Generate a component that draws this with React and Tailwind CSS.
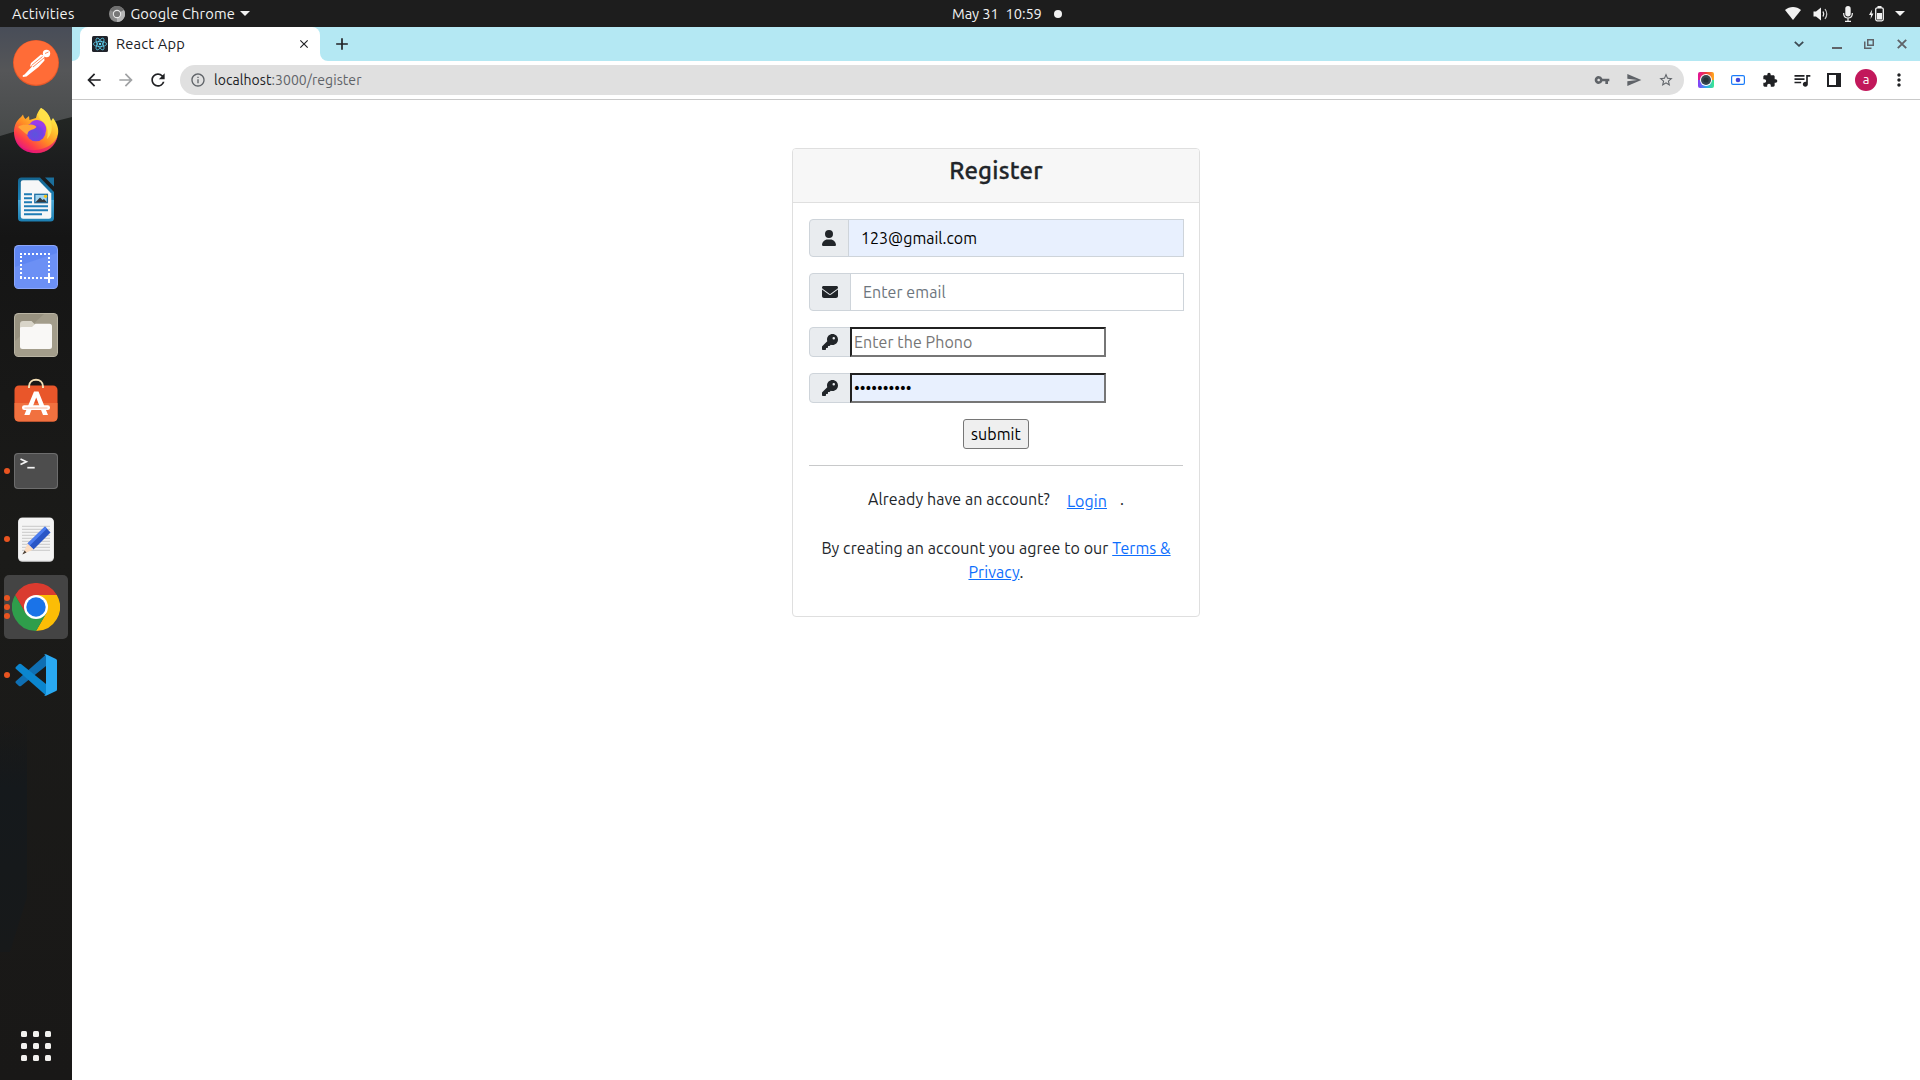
import React from "react";
import { FaUser, FaEnvelope, FaKey } from "react-icons/fa6";
import {
  MdArrowBack, MdArrowForward, MdRefresh, MdInfoOutline, MdVpnKey, MdSend, MdStarOutline,
  MdExtension, MdQueueMusic, MdMoreVert, MdClose, MdAdd,
} from "react-icons/md";

function Postman() {
  return (
    <svg width="46" height="46" viewBox="0 0 46 46">
      <circle cx="23" cy="23" r="23" fill="#e5582a" />
      <circle cx="23" cy="22.6" r="22.2" fill="#ff6c37" />
      <circle cx="33.5" cy="13.5" r="3.7" fill="#fff" />
      <path d="M31 15.5 L28 14.5 L18 23 L17 26.5 L19.5 26 L11.5 34.5 L9.8 35.3 L9.8 37 L13.5 36.5 L25.5 27 L31.5 20.5 Z" fill="#fff" />
      <path d="M29.5 16.5 L18.5 25.5 M31 18 L20 27 M32 13.5 L35.5 12" stroke="#ff6c37" strokeWidth="0.8" fill="none" />
    </svg>
  );
}

function Firefox() {
  return (
    <svg width="46" height="48" viewBox="0 0 46 48">
      <defs>
        <linearGradient id="ffBody" x1="0.85" y1="0.1" x2="0.2" y2="0.95">
          <stop offset="0" stopColor="#fff44f" />
          <stop offset="0.3" stopColor="#ffc02e" />
          <stop offset="0.55" stopColor="#ff8a25" />
          <stop offset="0.8" stopColor="#ff3f47" />
          <stop offset="1" stopColor="#e31587" />
        </linearGradient>
        <radialGradient id="ffGlobe" cx="0.45" cy="0.65" r="0.65">
          <stop offset="0" stopColor="#5b55dc" />
          <stop offset="0.6" stopColor="#7542e5" />
          <stop offset="1" stopColor="#a83af0" />
        </radialGradient>
      </defs>
      <path d="M28 2 C35 6 37 11 38 15 L40 12 C44 17 46 23 45 28 C43 40 34 47 23 47 C10 47 1 38 1 26 C1 19 4 14 8 11 L10 8.5 C10.5 11 11.5 12 12.5 13 L16 10 L16.5 14 L23 12 C24 7 26 4 28 2 Z" fill="url(#ffBody)" />
      <path d="M2 32 C6 42 14 45 23 44 C33 43 42 38 45 29 C43 41 33 47.5 23 47.2 C12 47 4 41 2 32 Z" fill="#e3107a" opacity="0.6" />
      <circle cx="23" cy="25.5" r="9.8" fill="url(#ffGlobe)" />
      <path d="M5 21 C9 18 13 19 16 19 C19 18 22 19 23.5 21 C22 23 19 23.5 17 24.5 C15 25.5 14.5 27 14.5 29 C11 26 8 24 5 21 Z" fill="#ffa436" />
      <path d="M17 18 C19 14 24 13 28 15 C32 17 34 21 33 26 C31 22 29 19 25 18.5 Z" fill="#9a3bea" />
      <path d="M28 2 C35 6 37 12 38 16 C40 23 38 29 34 33 C36 25 34 18 29 15 C25 12 24 8 28 2 Z" fill="#ffe14a" opacity="0.9" />
    </svg>
  );
}

function Writer() {
  return (
    <svg width="36" height="45" viewBox="0 0 36 45">
      <defs>
        <linearGradient id="wr" x1="0" y1="0" x2="0" y2="1">
          <stop offset="0" stopColor="#14648f" />
          <stop offset="0.5" stopColor="#1c83b9" />
          <stop offset="0.51" stopColor="#4aa8d6" />
          <stop offset="1" stopColor="#1c7fb2" />
        </linearGradient>
      </defs>
      <path d="M3.5 0.5 H22 L36 15 V41 Q36 44.5 32.5 44.5 H3.5 Q0 44.5 0 41 V4 Q0 0.5 3.5 0.5 Z" fill="url(#wr)" />
      <path d="M27 0.5 H36 V9.5 Z" fill="#1b6f9c" />
      <path d="M5 3.3 H20.5 L33.3 16.5 V39.5 Q33.3 41.8 31 41.8 H5 Q2.8 41.8 2.8 39.5 V5.5 Q2.8 3.3 5 3.3 Z" fill="#f6f7f8" />
      <path d="M6 17.3 H14 M6 21.3 H14 M6 25.3 H14 M6 29.3 H30 M6 33.3 H30 M6 37.3 H24" stroke="#1e7cb5" strokeWidth="1.9" />
      <rect x="16.8" y="17.3" width="12.6" height="8.4" fill="#9ed4f0" stroke="#1d6fa3" strokeWidth="1.3" />
      <path d="M17.5 25.2 L22 20.5 L24.5 23 L26 22 L29 25.2 Z" fill="#343a3e" />
      <circle cx="27.5" cy="19.3" r="1.6" fill="#f5c211" />
    </svg>
  );
}

function ScreenshotTool() {
  return (
    <svg width="44" height="44" viewBox="0 0 44 44">
      <rect width="44" height="44" rx="4.5" fill="#8ba6fa" />
      <rect x="1" y="1" width="42" height="42" rx="4" fill="#5f86f2" />
      <path d="M1 22 L43 8 V39 Q43 43 39 43 H5 Q1 43 1 39 Z" fill="#6c90f5" />
      <path d="M6 9 H36 M7 11 V34 M35 12 V29 M6 33 H30" stroke="#fff" strokeWidth="2" strokeDasharray="2 2" fill="none" />
      <path d="M35 28 V38 M30 33 H40" stroke="#fff" strokeWidth="2" />
    </svg>
  );
}

function Files() {
  return (
    <svg width="44" height="44" viewBox="0 0 44 44">
      <rect width="44" height="44" rx="4.5" fill="#b9b4a3" />
      <rect x="1" y="1" width="42" height="42" rx="4" fill="#97917f" />
      <path d="M1 28 L30 1 H39 Q43 1 43 5 V39 Q43 43 39 43 H5 Q1 43 1 39 Z" fill="#a39d8b" />
      <path d="M6 11 Q6 8 9 8 H17.5 L21.5 12 V16 H6 Z" fill="#d9d5c9" />
      <path d="M6 15 Q6 14 8 14 H18 L21.5 10.8 H35.5 Q38 10.8 38 13.5 V33.5 Q38 36 35.5 36 H8.5 Q6 36 6 33.5 Z" fill="#f9f8f6" />
    </svg>
  );
}

function Software() {
  return (
    <svg width="44" height="44" viewBox="0 0 44 44">
      <rect x="0.5" y="7.5" width="43" height="36" rx="4.5" fill="#e9562a" />
      <path d="M0.5 25 H43.5 V39 Q43.5 43.5 39 43.5 H5 Q0.5 43.5 0.5 39 Z" fill="#f1713f" />
      <path d="M15 10 V8.5 C15 -0.5 29 -0.5 29 8.5 V10" stroke="#f3deb5" strokeWidth="2" fill="none" />
      <path d="M20 13.5 H24.5 L34 37 H29 L22.2 19.5 L15.5 37 H10.3 Z" fill="#fff" />
      <rect x="8" y="27.3" width="28" height="4.6" rx="2.2" fill="#fff" />
      <path d="M10.5 30 H33.5" stroke="#f4a88c" strokeWidth="0.8" />
    </svg>
  );
}

function TerminalIcon() {
  return (
    <svg width="44" height="36" viewBox="0 0 44 36">
      <rect width="44" height="36" rx="4" fill="#6d6d6d" />
      <rect x="1" y="1" width="42" height="34" rx="3.4" fill="#4d4d4d" />
      <path d="M6.5 6 L12.3 8.7 L6.5 11.4" stroke="#f4f4f4" strokeWidth="1.7" fill="none" />
      <path d="M13.3 14.7 H20.7" stroke="#f4f4f4" strokeWidth="1.7" />
    </svg>
  );
}

function TextEditor() {
  return (
    <svg width="36" height="45" viewBox="0 0 36 45">
      <rect y="0.5" width="36" height="44.3" rx="4.5" fill="#dcdcdc" />
      <rect x="0.6" y="1" width="34.8" height="42.4" rx="4" fill="#f4f4f4" />
      <path d="M4 9.3 H32 M4 12.3 H32 M4 15.3 H32 M4 18.3 H32 M4 21.3 H32 M4 24.3 H32 M4 27.3 H32 M4 30.3 H32 M4 33.3 H32" stroke="#c4c4c4" strokeWidth="0.9" />
      <path d="M27 9.5 L32.5 15.5 L15.5 32.5 L9.5 26.5 Z" fill="#2a56c6" />
      <path d="M27 9.5 L29 11.5 L11.7 28.7 L9.5 26.5 Z" fill="#4c7df0" />
      <path d="M9.5 26.5 L15.5 32.5 L5 37 Z" fill="#fbdcc0" />
      <path d="M6.6 33.5 L8.5 35.5 L4.3 37.6 Z" fill="#4a4038" />
    </svg>
  );
}

function ChromeLogo() {
  return (
    <svg width="48" height="48" viewBox="0 0 48 48">
      <path d="M24 12 H44.8 A24 24 0 0 1 24 48 L34.4 30 Z" fill="#fbbd06" />
      <path d="M3.2 12 L13.6 30 L24 36 L34.4 30 L24 48 A24 24 0 0 1 3.2 12 Z" fill="#2f9e4b" />
      <path d="M3.2 12 A24 24 0 0 1 44.8 12 H24 L13.6 30 Z" fill="#da3b2f" />
      <circle cx="24" cy="24" r="12" fill="#fff" />
      <circle cx="24" cy="24" r="9.7" fill="#1a73e8" />
    </svg>
  );
}

function VSCode() {
  return (
    <svg width="42" height="42" viewBox="0 0 42 42">
      <path d="M31 0.5 L31 12 L6 32 Q5 32.7 4 32 L0.8 29 Q0 28 0.8 27.2 Z" fill="#0f6fb3" />
      <path d="M31 41.5 L31 30 L6 10 Q5 9.3 4 10 L0.8 13 Q0 14 0.8 14.8 Z" fill="#0b86cf" />
      <path d="M31 0.3 L41 5 Q42 5.5 42 6.5 V35.5 Q42 36.5 41 37 L31 41.7 Q29.8 42 29 41 Q31 41.5 31 39 V3 Q31 0.5 29 1 Q29.8 0 31 0.3 Z" fill="#29a9f2" />
    </svg>
  );
}

const apps = [
  { name: "Postman", Icon: Postman, dots: 0, cls: "" },
  { name: "Firefox", Icon: Firefox, dots: 0, cls: "pb-[2px]" },
  { name: "LibreOffice Writer", Icon: Writer, dots: 0, cls: "" },
  { name: "Screenshot", Icon: ScreenshotTool, dots: 0, cls: "" },
  { name: "Files", Icon: Files, dots: 0, cls: "" },
  { name: "Software", Icon: Software, dots: 0, cls: "pb-[6px]" },
  { name: "Terminal", Icon: TerminalIcon, dots: 1, cls: "" },
  { name: "Text Editor", Icon: TextEditor, dots: 1, cls: "" },
  { name: "Chrome", Icon: ChromeLogo, dots: 3, cls: "" },
  { name: "Visual Studio Code", Icon: VSCode, dots: 1, cls: "" },
];

function Wallpaper() {
  return (
    <svg className="absolute inset-0" width="72" height="1053" viewBox="0 0 72 1053" aria-hidden="true">
      <defs>
        <linearGradient id="sky" x1="0" y1="0" x2="0" y2="1">
          <stop offset="0" stopColor="#484d58" />
          <stop offset="0.4" stopColor="#555658" />
          <stop offset="1" stopColor="#474a4a" />
        </linearGradient>
        <linearGradient id="land" x1="0" y1="0" x2="0" y2="1">
          <stop offset="0.06" stopColor="#262b27" />
          <stop offset="0.13" stopColor="#1c1d1e" />
          <stop offset="0.2" stopColor="#151515" />
          <stop offset="0.5" stopColor="#1b1b19" />
          <stop offset="1" stopColor="#191817" />
        </linearGradient>
        <linearGradient id="water" x1="0" y1="0" x2="0" y2="1">
          <stop offset="0" stopColor="#14181b" stopOpacity="0" />
          <stop offset="0.3" stopColor="#15191c" />
          <stop offset="1" stopColor="#17191a" />
        </linearGradient>
      </defs>
      <rect width="72" height="1053" fill="url(#land)" />
      <path d="M0 0 H72 V90 L48 96 L20 103 L0 109 Z" fill="url(#sky)" />
      <path d="M0 690 H27 V870 L10 925 H0 Z" fill="url(#water)" />
    </svg>
  );
}

function Dock() {
  return (
    <aside className="relative w-[72px] shrink-0 bg-[#181818]">
      <Wallpaper />
      <div className="relative flex h-full flex-col pt-[2px]">
        {apps.map(({ name, Icon, dots, cls }) => (
          <div key={name} className="flex h-[68px] items-center">
            <div className={"flex h-16 items-center " + (dots === 3 ? "mx-1 w-16 rounded-[5px] bg-[#444444]" : "w-full px-1")}>
              <div className="flex w-[6px] shrink-0 flex-col gap-[2.67px]">
                {Array.from({ length: dots }, (_, i) => (
                  <i key={i} className="size-[6px] rounded-full bg-[#e95420]" />
                ))}
              </div>
              <div className={"flex w-[52px] items-center justify-center " + cls}>
                <Icon />
              </div>
            </div>
          </div>
        ))}
        <div className="mt-auto mb-[19px] grid grid-cols-3 gap-[6px] self-center">
          {Array.from({ length: 9 }, (_, i) => (
            <i key={i} className="size-[6px] rounded-[1.5px] bg-[#f2f1ee]" />
          ))}
        </div>
      </div>
    </aside>
  );
}

function TopBar() {
  return (
    <header className="grid h-[27px] shrink-0 grid-cols-3 items-center bg-[#1d1d1d] text-[14.67px] text-[#f2f2f2]">
      <div className="flex items-center pl-3">
        <span className="tracking-[0.24px]">Activities</span>
        <svg className="ml-[34px] mr-[6px]" width="16" height="16" viewBox="0 0 16 16">
          <circle cx="8" cy="8" r="8" fill="#8a8a8a" />
          <path d="M8 8 L1 4 A8 8 0 0 1 15 4 Z" fill="#6f6f6f" />
          <path d="M8 8 L15 4 A8 8 0 0 1 8 16 Z" fill="#b5b5b5" />
          <circle cx="8" cy="8" r="4.2" fill="#e8e8e8" />
          <circle cx="8" cy="8" r="3.1" fill="#777" />
        </svg>
        <span className="tracking-[0.12px]">Google Chrome</span>
        <svg className="ml-[5px]" width="10" height="5" viewBox="0 0 10 5"><path d="M0 0 H10 L5 5 Z" fill="#f2f2f2" /></svg>
      </div>
      <div className="flex items-center pl-[312px]">
        <span className="tracking-[-0.1px]">May 31</span>
        <span className="ml-[7px] tracking-[-0.1px]">10:59</span>
        <i className="ml-[12px] size-2 rounded-full bg-[#f2f2f2]" />
      </div>
      <div className="flex items-center justify-end pr-[15px]">
        <svg width="16" height="13" viewBox="0 0 16 13"><path d="M0 3 C4.5 -1 11.5 -1 16 3 L8 13 Z" fill="#f2f2f2" /></svg>
        <svg className="ml-[12px]" width="16" height="14" viewBox="0 0 16 14">
          <path d="M0.5 4.5 H3 L8 0.5 V13.5 L3 9.5 H0.5 Z" fill="#f2f2f2" />
          <path d="M10 4.5 Q11.5 7 10 9.5" stroke="#f2f2f2" strokeWidth="1.3" fill="none" />
          <path d="M12 2 Q15.5 7 12 12" stroke="#c8c8c8" strokeWidth="1.2" fill="none" />
        </svg>
        <svg className="ml-[14px]" width="10" height="16" viewBox="0 0 10 16">
          <rect x="2.3" y="0" width="5.4" height="10.5" rx="2.7" fill="#f2f2f2" />
          <path d="M0.7 7 V8 Q1 12 5 12 Q9 12 9.3 8 V7 M5 12 V15 M2 15.3 H8" stroke="#f2f2f2" strokeWidth="1.2" fill="none" />
        </svg>
        <svg className="ml-[16px]" width="15" height="16" viewBox="0 0 15 16">
          <path d="M3.2 3.5 L0 9 H2 L1.6 13 L4.5 7.5 H2.6 Z" fill="#f2f2f2" />
          <rect x="6.7" y="1.8" width="7.6" height="13" rx="1.5" stroke="#f2f2f2" strokeWidth="1.3" fill="none" />
          <rect x="8.5" y="0" width="4" height="2" fill="#f2f2f2" />
          <rect x="8" y="7" width="5" height="6.5" fill="#f2f2f2" />
        </svg>
        <svg className="ml-[11px]" width="10" height="5" viewBox="0 0 10 5"><path d="M0 0 H10 L5 5 Z" fill="#f2f2f2" /></svg>
      </div>
    </header>
  );
}

function TabStrip() {
  return (
    <div className="flex h-[34px] shrink-0 bg-[#b4e8f3]">
      <div className="w-2 bg-white"><div className="h-full rounded-br-lg bg-[#b4e8f3]" /></div>
      <div className="flex w-60 items-center rounded-t-lg bg-white pl-3 pr-[9px] text-[14.67px] text-[#202124]">
        <svg className="mr-2" width="16" height="16" viewBox="0 0 16 16">
          <rect width="16" height="16" rx="1.5" fill="#20232a" />
          <g stroke="#61dafb" strokeWidth="0.7" fill="none">
            <ellipse cx="8" cy="8" rx="6.6" ry="2.6" />
            <ellipse cx="8" cy="8" rx="6.6" ry="2.6" transform="rotate(60 8 8)" />
            <ellipse cx="8" cy="8" rx="6.6" ry="2.6" transform="rotate(120 8 8)" />
          </g>
          <circle cx="8" cy="8" r="1.2" fill="#61dafb" />
        </svg>
        <span className="tracking-[0.2px]">React App</span>
        <MdClose className="ml-auto size-[14px] text-[#202124]" />
      </div>
      <div className="w-2 bg-white"><div className="h-full rounded-bl-lg bg-[#b4e8f3]" /></div>
      <MdAdd className="ml-1 mt-[7px] size-5 text-[#202124]" />
      <div className="ml-auto flex items-center pr-[13px] text-[#5f6368]">
        <svg width="10" height="6" viewBox="0 0 10 6"><path d="M0.8 0.8 L5 4.8 L9.2 0.8" stroke="#3c4a52" strokeWidth="1.8" fill="none" /></svg>
        <svg className="ml-[28px]" width="10" height="10" viewBox="0 0 10 10"><path d="M0 9 H10" stroke="#5f6368" strokeWidth="2" /></svg>
        <svg className="ml-[22px]" width="10" height="10" viewBox="0 0 10 10" fill="none" stroke="#5f6368">
          <rect x="3.75" y="0.75" width="5.5" height="5.5" strokeWidth="1.5" />
          <path d="M0.75 2.5 V9.25 H7.5" strokeWidth="1.5" />
        </svg>
        <svg className="ml-[23px]" width="10" height="10" viewBox="0 0 10 10"><path d="M0.8 0.8 L9.2 9.2 M9.2 0.8 L0.8 9.2" stroke="#5f6368" strokeWidth="1.9" /></svg>
      </div>
    </div>
  );
}

function Toolbar() {
  return (
    <div className="flex h-[39px] shrink-0 items-center border-b border-[#c9c9c9] bg-white pl-3 pr-[11px] text-[#202124]">
      <MdArrowBack className="size-5" />
      <MdArrowForward className="ml-3 size-5 text-[#a0a2a4]" />
      <MdRefresh className="ml-3 size-5" />
      <div className="ml-3 flex h-[30px] flex-1 items-center rounded-full bg-[#e0e0e0] pl-[10px] pr-[10px] text-[14px] tracking-[0.06px] text-[#5f6368]">
        <MdInfoOutline className="mr-2 size-4" />
        <span className="text-[#202124]">localhost</span>
        <span>:3000/register</span>
        <MdVpnKey className="ml-auto size-4" />
        <MdSend className="ml-4 size-4" />
        <MdStarOutline className="ml-4 size-4" />
      </div>
      <svg className="ml-[14px]" width="16" height="16" viewBox="0 0 16 16">
        <defs>
          <linearGradient id="lensTop" x1="0" y1="0" x2="1" y2="0"><stop offset="0" stopColor="#e0149a" /><stop offset="0.5" stopColor="#f0383c" /><stop offset="1" stopColor="#ffb01f" /></linearGradient>
          <linearGradient id="lensBottom" x1="0" y1="0" x2="1" y2="0"><stop offset="0" stopColor="#8a3cf5" /><stop offset="0.5" stopColor="#2fa8f0" /><stop offset="1" stopColor="#3ce88a" /></linearGradient>
        </defs>
        <path d="M0 8 V2 Q0 0 2 0 H14 Q16 0 16 2 V8 Z" fill="url(#lensTop)" />
        <path d="M0 8 V14 Q0 16 2 16 H14 Q16 16 16 14 V8 Z" fill="url(#lensBottom)" />
        <circle cx="8" cy="8" r="6" fill="#fff" /><circle cx="8" cy="8" r="5" fill="#37474f" /><circle cx="8" cy="8" r="2.6" fill="#263238" />
      </svg>
      <svg className="ml-[17px]" width="14" height="10" viewBox="0 0 14 10">
        <rect x="0.6" y="0.6" width="12.8" height="8.8" rx="1.4" fill="#fff" stroke="#1a7cf9" strokeWidth="1.2" />
        <circle cx="7" cy="5" r="2.3" fill="#4646d8" />
      </svg>
      <MdExtension className="ml-[17px] size-4" />
      <MdQueueMusic className="ml-[14px] size-5" />
      <svg className="ml-[15px]" width="14" height="14" viewBox="0 0 14 14"><path d="M0 0 H14 V14 H0 Z M2 2 V12 H9 V2 Z" fill="#202124" fillRule="evenodd" /></svg>
      <span className="ml-[14px] flex size-[22px] items-center justify-center rounded-full bg-[#c2185b] pb-px text-[13px] leading-none text-white">a</span>
      <MdMoreVert className="ml-3 size-5" />
    </div>
  );
}

function Addon({ className, children }) {
  return (
    <span className={"flex shrink-0 items-center rounded-l border border-[#ced4da] bg-[#e9ecef] pl-3 text-[#212529] " + className}>
      {children}
    </span>
  );
}

function RegisterCard() {
  return (
    <section className="mt-12 ml-[720px] flex h-[469px] w-[408px] flex-col rounded border border-[#dfdfdf] bg-white text-base tracking-[0.07px] text-[#212529]">
      <div className="flex h-[54px] shrink-0 justify-center rounded-t-[3px] border-b border-[#dfdfdf] bg-[#f7f7f7] pt-[7px] text-[24px] leading-[29px] font-medium tracking-[0.2px] [-webkit-text-stroke:0.3px_#212529]">
        Register
      </div>
      <div className="flex flex-col pt-4 pr-[15px] pl-4">
        <div className="flex h-[38px]">
          <Addon className="w-10"><FaUser className="h-4 w-[14px]" /></Addon>
          <div className="-ml-px flex flex-1 items-center border border-[#ced4da] bg-[#e8f0fe] pl-3 tracking-[0px] text-black">123@gmail.com</div>
        </div>
        <div className="mt-4 flex h-[38px]">
          <Addon className="w-[42px]"><FaEnvelope /></Addon>
          <div className="-ml-px flex flex-1 items-center border border-[#ced4da] bg-white pl-3 text-[#6c757d]">Enter email</div>
        </div>
        <div className="mt-4 flex h-[30px]">
          <Addon className="w-[42px]"><FaKey /></Addon>
          <div className="-ml-px flex w-64 items-center border-2 border-t-[#212121] border-r-[#767676] border-b-[#767676] border-l-[#212121] bg-white pl-[2px] text-[#757575]">Enter the Phono</div>
        </div>
        <div className="mt-4 flex h-[30px]">
          <Addon className="w-[42px]"><FaKey /></Addon>
          <div className="-ml-px flex w-64 items-center border-2 border-t-[#212121] border-r-[#767676] border-b-[#767676] border-l-[#212121] bg-[#e8f0fe] pl-[2px] tracking-[0px] text-black">••••••••••</div>
        </div>
        <button className="mt-4 mr-px flex h-[30px] w-[66px] items-center justify-center self-center rounded-[3px] border border-[#767676] bg-[#efefef] text-black">submit</button>
        <hr className="mt-4 mr-px border-t border-[#c8c9ca]" />
        <p className="mt-[21px] flex h-6 pl-[59px] leading-6">
          <span>Already have an account?</span>
          <a className="ml-[17px] mt-[2px] text-[#0d6efd] underline">Login</a>
          <span className="ml-[13px]">.</span>
        </p>
        <p className="mt-[25px] mr-px text-center leading-6">
          By creating an account you agree to our{" "}
          <a className="text-[#0d6efd] underline">Terms &amp;</a>
          <br />
          <a className="text-[#0d6efd] underline">Privacy</a>.
        </p>
      </div>
    </section>
  );
}

export default function App() {
  return (
    <div className="flex h-[1080px] w-[1920px] flex-col overflow-hidden bg-white font-['Ubuntu','Noto_Sans',sans-serif]">
      <TopBar />
      <div className="flex min-h-0 flex-1">
        <Dock />
        <div className="flex flex-1 flex-col">
          <TabStrip />
          <Toolbar />
          <main className="flex-1">
            <RegisterCard />
          </main>
        </div>
      </div>
    </div>
  );
}
